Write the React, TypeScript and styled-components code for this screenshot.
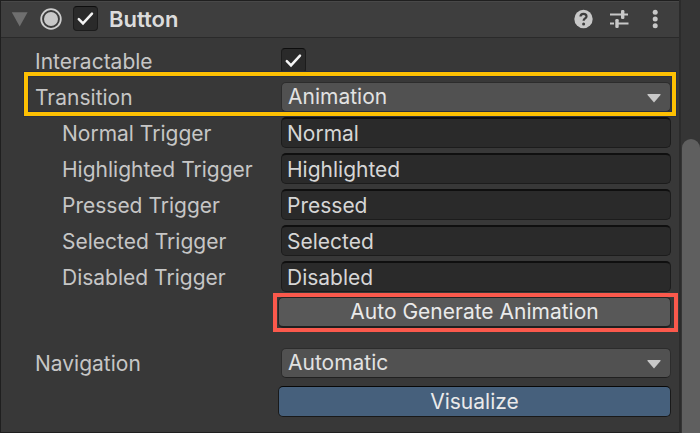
import React, { useId, useState } from "react";
import styled, { createGlobalStyle, css } from "styled-components";

const GlobalStyle = createGlobalStyle`
  *, *::before, *::after { box-sizing: border-box; }
  body { margin: 0; background: #383838; }
  button, input, select { font: inherit; margin: 0; }
`;

const Inspector = styled.div`
  display: flex;
  min-height: 100vh;
  font-family: Inter, "Liberation Sans", sans-serif;
  font-size: 21px;
  font-weight: 400;
  line-height: 26px;
  color: #c6c6c6;
  background: #383838;
`;

const Panel = styled.main`
  flex: 1;
  min-width: 0;
  border: 1px solid #1f1f1f;
  border-right: 0;
`;

const Header = styled.header`
  display: flex;
  align-items: center;
  height: 37px;
  padding: 0 12px 2px 10px;
  background: #3e3e3e;
  border-top: 1px solid #484848;
  border-bottom: 1px solid #2a2a2a;
`;

const Title = styled.h1`
  flex: 1;
  margin: 0 0 0 11px;
  font-size: 22px;
  font-weight: 600;
  line-height: 26px;
  color: #dcdcdc;
`;

const IconButton = styled.button`
  display: flex;
  padding: 0;
  border: 0;
  background: none;
  color: #c8c8c8;
`;

const Tools = styled.div`
  display: flex;
  gap: 12px;
`;

const ComponentIcon = styled.svg`
  margin: 0 10px;
`;

const CheckFrame = styled.span`
  position: relative;
  display: flex;
  width: 25px;
  height: 25px;

  svg {
    position: absolute;
    inset: 0;
    pointer-events: none;
  }
`;

const CheckInput = styled.input`
  appearance: none;
  width: 25px;
  height: 25px;
  border: 1px solid #1c1c1c;
  border-top-color: #0d0d0d;
  border-radius: 4px;
  background: #2a2a2a;
`;

const Fields = styled.div`
  display: flex;
  flex-direction: column;
  gap: 5px;
  padding: 7px 8px 15px 34px;
`;

const Row = styled.div<{ $spaceBefore?: number; $highlighted?: boolean }>`
  position: relative;
  display: grid;
  grid-template-columns: 246px minmax(0, 1fr);
  align-items: center;
  height: 31px;
  margin-top: ${(p) => p.$spaceBefore ?? 0}px;

  ${(p) =>
    p.$highlighted &&
    css`
      &::after {
        content: "";
        position: absolute;
        z-index: 1;
        inset: -9px -5px -4px -11px;
        border: 4px solid #fdc003;
        box-shadow: 0 0 0 1px #2b3040, inset 0 0 0 1px #2b3040;
        pointer-events: none;
      }
    `}
`;

const Label = styled.label<{ $nested?: boolean }>`
  padding-top: 2px;
  padding-left: ${(p) => (p.$nested ? 27 : 0)}px;
  white-space: nowrap;
`;

const TextInput = styled.input`
  width: 100%;
  height: 31px;
  padding: 0 5px;
  border: 1px solid #1c1c1c;
  border-top: 2px solid #0f0f0f;
  border-radius: 5px;
  background: #2a2a2a;
  color: #d6d6d6;
`;

const SelectFrame = styled.span`
  position: relative;
  display: block;
  align-self: end;

  svg {
    position: absolute;
    top: 12px;
    right: 10px;
    pointer-events: none;
  }
`;

const Select = styled.select`
  appearance: none;
  display: block;
  width: 100%;
  height: 30px;
  padding: 0 30px 0 6px;
  border: 1px solid #2c2c2c;
  border-bottom-color: #202020;
  border-radius: 5px;
  background: #515151;
  color: #e2e2e2;
`;

const ActionRow = styled.div<{ $spaceBefore?: number; $highlighted?: boolean }>`
  position: relative;
  display: flex;
  height: 31px;
  margin-top: ${(p) => p.$spaceBefore ?? 0}px;
  margin-left: 243px;

  ${(p) =>
    p.$highlighted &&
    css`
      &::after {
        content: "";
        position: absolute;
        inset: -4px -7px -4px -5px;
        border: 4px solid #fb594c;
        pointer-events: none;
      }
    `}
`;

const ActionButton = styled.button<{ $primary?: boolean }>`
  flex: 1;
  padding: 0;
  border: 1px solid #242424;
  border-radius: 5px;
  background: #585858;
  color: #eaeaea;

  ${(p) =>
    p.$primary
      ? css`
          border: 1px solid #191919;
          border-top-color: #080808;
          background: #46607c;
        `
      : css`
          border-bottom: 2px solid #1f1f1f;
        `}
`;

const ScrollTrack = styled.div`
  display: flex;
  flex-direction: column;
  width: 21px;
  padding: 139px 0 0 1px;
  background: #353535;
  border-left: 2px solid #2b2b2b;
`;

const ScrollThumb = styled.div`
  flex: 1;
  border-radius: 9px 9px 0 0;
  background: #5f5f5f;
`;

function CheckBox(props: { id?: string; label?: string }) {
  const [checked, setChecked] = useState(true);
  return (
    <CheckFrame>
      <CheckInput
        type="checkbox"
        id={props.id}
        aria-label={props.label}
        checked={checked}
        onChange={(e) => setChecked(e.target.checked)}
      />
      {checked && (
        <svg width="25" height="25" viewBox="0 0 25 25" fill="none" aria-hidden="true">
          <path d="M5.8 13.2 10 17.4 19 7.6" stroke="#f4f4f4" strokeWidth="2.5" strokeLinecap="round" />
        </svg>
      )}
    </CheckFrame>
  );
}

function DropDown({ id, initial, options }: { id: string; initial: string; options: string[] }) {
  return (
    <SelectFrame>
      <Select id={id} defaultValue={initial}>
        {options.map((option) => (
          <option key={option}>{option}</option>
        ))}
      </Select>
      <svg width="14" height="9" viewBox="0 0 14 9" aria-hidden="true">
        <path d="M.5 0h13v1L7 8.5.5 1z" fill="#c8c8c8" />
      </svg>
    </SelectFrame>
  );
}

function TriggerField({ name }: { name: string }) {
  const id = useId();
  return (
    <Row>
      <Label $nested htmlFor={id}>{`${name} Trigger`}</Label>
      <TextInput id={id} type="text" defaultValue={name} />
    </Row>
  );
}

const triggers = ["Normal", "Highlighted", "Pressed", "Selected", "Disabled"];

export default function App() {
  return (
    <>
      <GlobalStyle />
      <Inspector>
        <Panel>
          <Header>
            <IconButton type="button" aria-label="Collapse component" aria-expanded="true">
              <svg width="18" height="16" viewBox="0 0 18 16">
                <path d="M.8 1.2h15.8L8.7 15.5z" fill="#6f6f6f" />
              </svg>
            </IconButton>
            <ComponentIcon width="24" height="24" viewBox="0 0 24 24" aria-hidden="true">
              <circle cx="12" cy="12" r="9.8" fill="#3b3b3b" stroke="#cecece" strokeWidth="1.8" />
              <circle cx="12" cy="12" r="7" fill="#c8c8c8" />
            </ComponentIcon>
            <CheckBox label="Enable Button" />
            <Title>Button</Title>
            <Tools>
              <IconButton type="button" aria-label="Help">
                <svg width="24" height="24" viewBox="0 0 24 24" fill="none">
                  <circle cx="12.5" cy="12" r="9.2" fill="#c8c8c8" />
                  <path
                    d="M9.5 9.6C9.5 7.8 10.7 6.8 12.5 6.8s3 1 3 2.6c0 2.1-2.9 2.1-2.9 4.4"
                    stroke="#3e3e3e"
                    strokeWidth="2.2"
                  />
                  <circle cx="12.6" cy="16.9" r="1.5" fill="#3e3e3e" />
                </svg>
              </IconButton>
              <IconButton type="button" aria-label="Presets">
                <svg width="24" height="24" viewBox="0 0 24 24" fill="none">
                  <path d="M3 7.5h11M17 7.5h4M3 16.5h4M10 16.5h11.5" stroke="#c8c8c8" strokeWidth="1.8" />
                  <rect x="14" y="3" width="3.4" height="9" rx="1.3" fill="#c8c8c8" />
                  <rect x="8.3" y="12" width="3.4" height="9" rx="1.3" fill="#c8c8c8" />
                </svg>
              </IconButton>
              <IconButton type="button" aria-label="More options">
                <svg width="24" height="24" viewBox="0 0 24 24" fill="#c8c8c8">
                  <circle cx="12.2" cy="5.3" r="2.5" />
                  <circle cx="12.2" cy="12" r="2.5" />
                  <circle cx="12.2" cy="18.7" r="2.5" />
                </svg>
              </IconButton>
            </Tools>
          </Header>
          <Fields>
            <Row>
              <Label htmlFor="interactable">Interactable</Label>
              <CheckBox id="interactable" />
            </Row>
            <Row $highlighted>
              <Label htmlFor="transition">Transition</Label>
              <DropDown
                id="transition"
                initial="Animation"
                options={["None", "Color Tint", "Sprite Swap", "Animation"]}
              />
            </Row>
            {triggers.map((name) => (
              <TriggerField key={name} name={name} />
            ))}
            <ActionRow $highlighted>
              <ActionButton type="button">Auto Generate Animation</ActionButton>
            </ActionRow>
            <Row $spaceBefore={14}>
              <Label htmlFor="navigation">Navigation</Label>
              <DropDown
                id="navigation"
                initial="Automatic"
                options={["None", "Horizontal", "Vertical", "Automatic", "Explicit"]}
              />
            </Row>
            <ActionRow $spaceBefore={3}>
              <ActionButton type="button" $primary>
                Visualize
              </ActionButton>
            </ActionRow>
          </Fields>
        </Panel>
        <ScrollTrack aria-hidden="true">
          <ScrollThumb />
        </ScrollTrack>
      </Inspector>
    </>
  );
}
